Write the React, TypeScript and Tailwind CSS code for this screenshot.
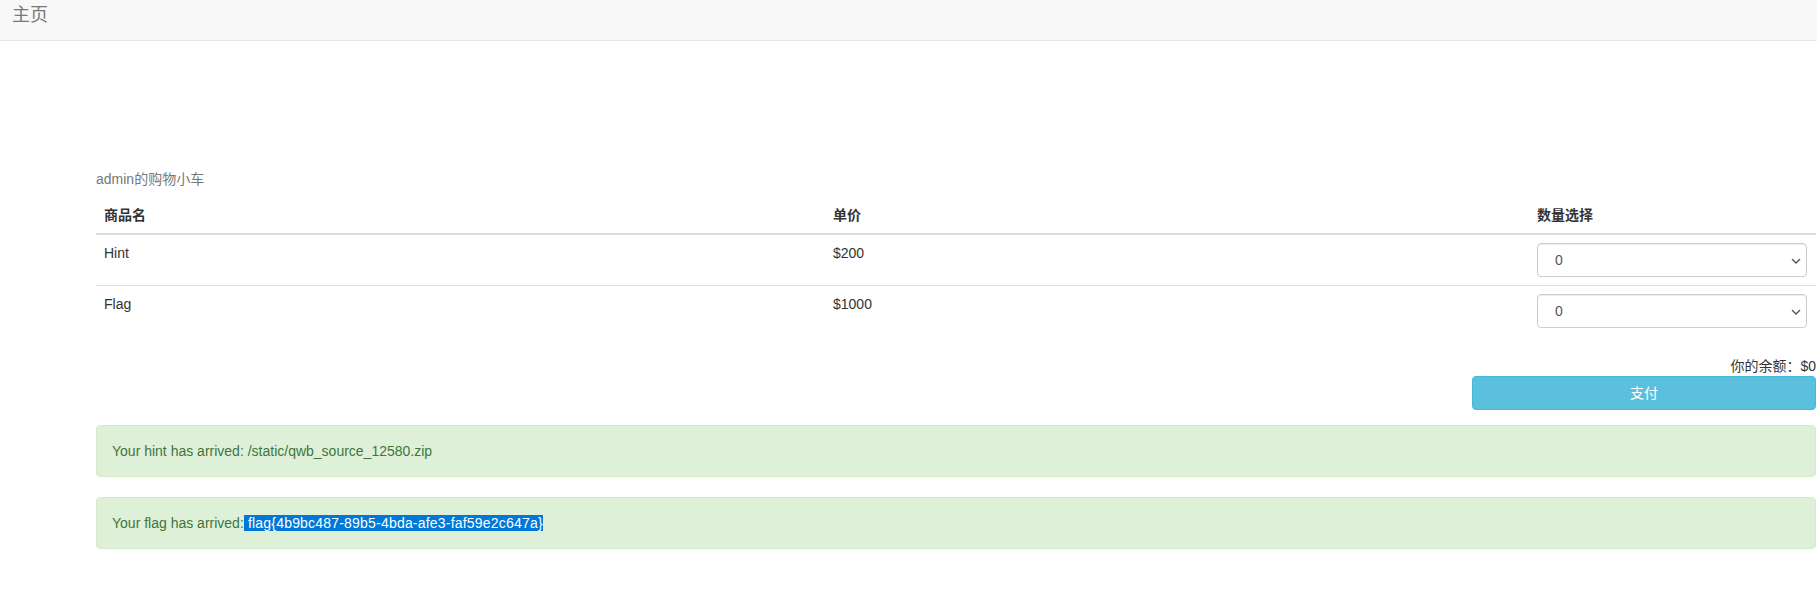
import React from 'react';

const font = { fontFamily: '"Liberation Sans", Arial, "Noto Sans CJK SC", sans-serif' };

const items = [
  { name: 'Hint', price: '$200' },
  { name: 'Flag', price: '$1000' },
];

const QtySelect: React.FC = () => (
  <div className="relative mr-px">
    <select className="appearance-none block w-full h-[34px] pl-[17px] pr-8 text-sm text-[#555] bg-white border border-[#ccc] rounded-[4px] shadow-[inset_0_1px_1px_rgba(0,0,0,0.075)] outline-none">
      <option>0</option>
      <option>1</option>
      <option>2</option>
    </select>
    <svg
      className="absolute right-[6px] top-[15px] pointer-events-none"
      width="10"
      height="6"
      viewBox="0 0 10 6"
      fill="none"
    >
      <path d="M1 1l4 4 4-4" stroke="#555" strokeWidth="1.4" />
    </svg>
  </div>
);

export default function App() {
  return (
    <div className="min-h-screen bg-white text-sm text-[#333] leading-5" style={font}>
      {/* Navbar */}
      <div className="h-[41px] bg-[#f8f8f8] border-b border-[#e7e7e7] px-[12px] pt-[5px]">
        <span className="text-[18px] leading-5 text-[#777]">主页</span>
      </div>

      {/* Cart */}
      <div className="pl-[96px] pr-[1px] mt-[120px]">
        <div className="py-2 text-[#777]">admin的购物小车</div>

        <div className="grid grid-cols-[729px_704px_1fr] font-bold border-b-2 border-[#ddd]">
          <div className="p-2">商品名</div>
          <div className="p-2">单价</div>
          <div className="p-2">数量选择</div>
        </div>

        {items.map((item, i) => (
          <div
            key={item.name}
            className={`grid grid-cols-[729px_704px_1fr] ${i > 0 ? 'border-t border-[#ddd]' : ''}`}
          >
            <div className="p-2">{item.name}</div>
            <div className="p-2">{item.price}</div>
            <div className="p-2">
              <QtySelect />
            </div>
          </div>
        ))}

        <div className="mt-5 text-right">你的余额：$0</div>
        <div className="flex justify-end">
          <button className="w-[344px] h-[34px] bg-[#5bc0de] border border-[#46b8da] rounded-[4px] text-white text-sm">
            支付
          </button>
        </div>

        {/* Alerts */}
        <div className="mt-[15px] p-[15px] bg-[#dff0d8] border border-[#d6e9c6] rounded-[4px] text-[#3c763d]">
          Your hint has arrived: /static/qwb_source_12580.zip
        </div>
        <div className="mt-5 p-[15px] bg-[#dff0d8] border border-[#d6e9c6] rounded-[4px] text-[#3c763d]">
          Your flag has arrived:
          <span className="bg-[#0078d7] text-white tracking-[0.2px]"> flag{'{'}4b9bc487-89b5-4bda-afe3-faf59e2c647a{'}'}</span>
        </div>
      </div>
    </div>
  );
}
